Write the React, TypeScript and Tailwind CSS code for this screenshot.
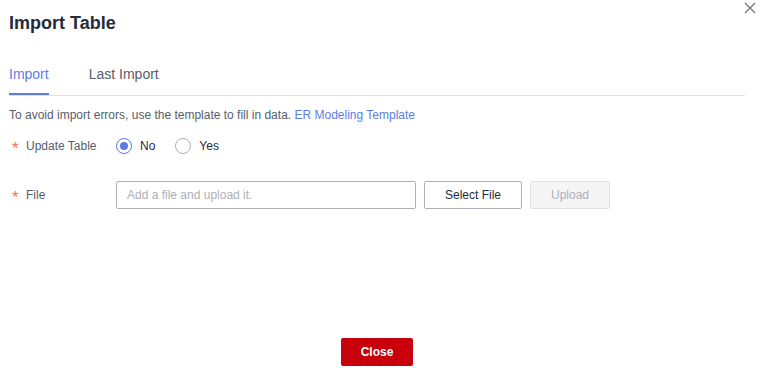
import React from "react";

const Star = () => (
  <span className="mr-[5px] inline-block h-[8px] w-[9px] text-[17px] leading-[14px] text-[#f66f6a]">*</span>
);

const Radio = ({ label, checked }: { label: string; checked?: boolean }) => (
  <label className="flex items-center gap-[8px]">
    <span
      className={
        "flex h-[16px] w-[16px] items-center justify-center rounded-full border " +
        (checked ? "border-[#5e7ce0]" : "border-[#adb0b8]")
      }
    >
      {checked && <span className="h-[8px] w-[8px] rounded-full bg-[#5e7ce0]" />}
    </span>
    <span className="text-[12px] text-[#252b3a]">{label}</span>
  </label>
);

const App = () => {
  return (
    <div className="relative h-[372px] w-[764px] bg-white font-['Liberation_Sans',Arial,sans-serif]">
      <button className="absolute right-[8px] top-[2px] text-[#71757f]">
        <svg width="12" height="12" viewBox="0 0 12 12" fill="none" stroke="currentColor" strokeWidth="1.3">
          <path d="M1 1L11 11M11 1L1 11" />
        </svg>
      </button>

      <div className="pl-[9px] pr-[19px] pt-[12px]">
        <h1 className="text-[18px] font-bold leading-[22px] text-[#252b3a]">Import Table</h1>

        <div className="mt-[30px] flex border-b border-[#dfe1e6] text-[14px]">
          <div className="border-b-2 border-[#5e7ce0] pb-[8px] text-[#5e7ce0]">Import</div>
          <div className="ml-[40px] pb-[8px] text-[#575d6c]">Last Import</div>
        </div>

        <p className="mt-[11px] text-[12px] leading-[16px] text-[#575d6c]">
          To avoid import errors, use the template to fill in data.{" "}
          <span className="text-[#5e7ce0]">ER Modeling Template</span>
        </p>

        <div className="mt-[9px] flex h-[28px] items-center">
          <div className="flex w-[107px] items-center pl-[3px] text-[12px] text-[#575d6c]">
            <Star />
            Update Table
          </div>
          <div className="flex items-center gap-[20px]">
            <Radio label="No" checked />
            <Radio label="Yes" />
          </div>
        </div>

        <div className="mt-[21px] flex h-[28px] items-center">
          <div className="flex w-[107px] items-center pl-[3px] text-[12px] text-[#575d6c]">
            <Star />
            File
          </div>
          <div className="flex h-[28px] w-[300px] items-center rounded-[2px] border border-[#adb0b8] px-[10px] text-[12px] text-[#adb0b8]">
            Add a file and upload it.
          </div>
          <button className="ml-[8px] h-[28px] w-[98px] rounded-[2px] border border-[#adb0b8] bg-white text-[12px] text-[#252b3a]">
            Select File
          </button>
          <button className="ml-[8px] h-[28px] w-[80px] rounded-[2px] border border-[#dfe1e6] bg-[#f5f5f6] text-[12px] text-[#adb0b8]">
            Upload
          </button>
        </div>

        <div className="mt-[129px] pl-[332px]">
          <button className="h-[28px] w-[72px] rounded-[2px] bg-[#c7000b] text-[12px] font-bold text-white">
            Close
          </button>
        </div>
      </div>
    </div>
  );
};

export default App;
